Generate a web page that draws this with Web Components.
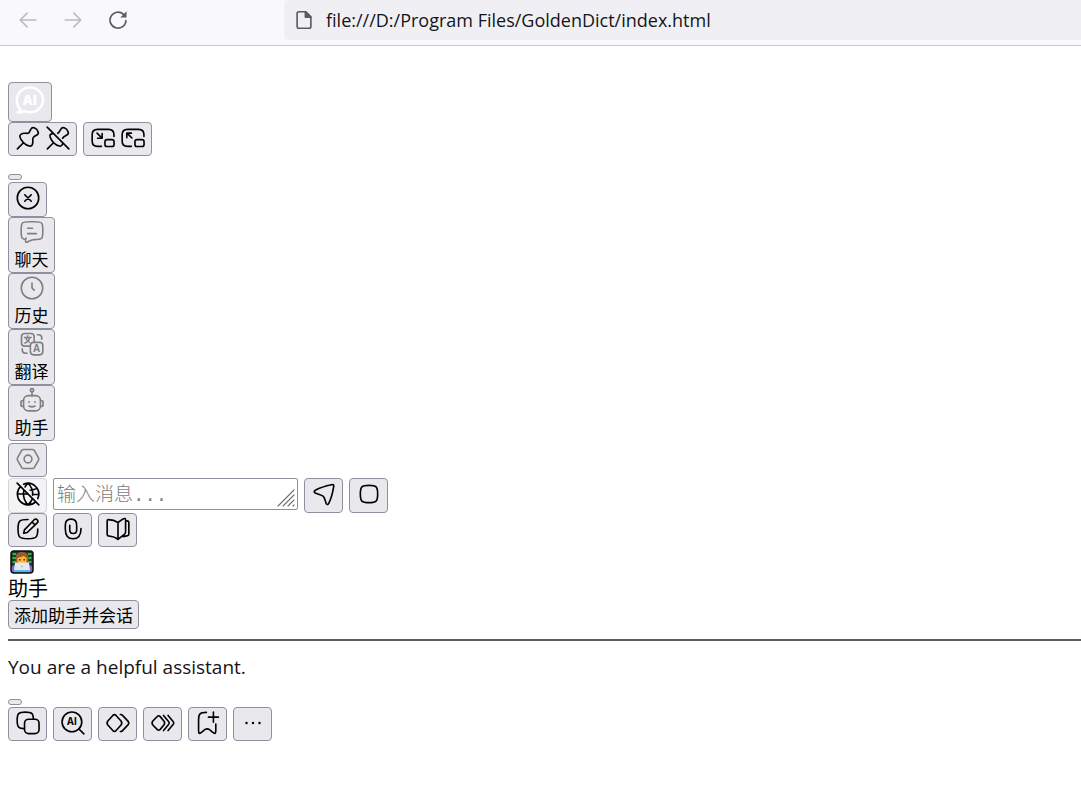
<!DOCTYPE html>
<html lang="zh-CN">
<head>
<meta charset="utf-8">
<meta name="viewport" content="width=device-width, initial-scale=1">
<title>GoldenDict</title>
<style>
  body { margin: 0; background: #fff; color: #15141a; font-family: "Open Sans", "Noto Sans CJK SC", sans-serif; }
</style>
</head>
<body>
<browser-bar url="file:///D:/Program Files/GoldenDict/index.html"></browser-bar>
<assistant-page></assistant-page>

<script>
const ICONS = {
  back: '<path d="M20.500 12H4M11 4.500L3.500 12L11 19.500"/>',
  forward: '<path d="M3.500 12H20M13 4.500L20.500 12L13 19.500"/>',
  reload: '<path d="M20.700 12.500A8.700 8.700 0 1 1 18 5.800"/><path d="M21.300 2.500V9.300H14.500Z" fill="currentColor" stroke="none"/>',
  file: '<path d="M6.500 3H14L19.500 8.500V19Q19.500 21 17.500 21H6.500Q4.500 21 4.500 19V5Q4.500 3 6.500 3Z"/><path d="M13.500 3V9H19.500Z" fill="currentColor"/>',
  logo: '<path d="M5 19.600C3.400 17.800 2.200 15.200 2.200 12A9.800 9.300 0 1 1 12 21.200C10.600 21.200 9.200 20.900 8 20.300C6.600 20.800 4.600 22 2.900 21.500C2.300 21.200 4.700 20.600 5 19.600Z"/><text x="12" y="15.500" font-size="10" font-weight="800" text-anchor="middle" fill="currentColor" stroke="none">AI</text>',
  pin: '<path d="M2.200 22L7.800 16.400M13.300 19.400C9.400 18.600 5.300 14.600 4.500 10.700C4.300 9.700 4.600 9 5.700 8.400C6.800 7.700 8 7.500 9.400 7.600C11.400 7.800 12.100 7.900 12.600 7.400C13.200 6.900 14 5 14.700 3.800C15.400 2.500 16.300 2.100 17.700 2.600C19.500 3.200 20.800 4.600 21.400 6.400C21.800 7.700 21.500 8.500 20.200 9.200L18.100 10.400C16.600 11.300 16.300 11.600 16.400 13.200C16.600 15 16.800 16.600 15.900 18.300C15.400 19.300 14.600 19.700 13.300 19.400Z"/>',
  unpin: '<path d="M2.200 22L7.800 16.400M2 2L22 22M7.500 7.700C4.500 8.300 4.200 9.200 4.800 11.400C6 15 9.600 18.600 13.300 19.400C15.300 19.800 16.200 18.200 16.400 16.500M11.800 7.700C12.800 7.200 13.600 5.800 14.700 3.800C15.400 2.500 16.300 2.100 17.700 2.600C19.500 3.200 20.800 4.600 21.400 6.400C21.800 7.700 21.500 8.500 20.200 9.200C18 10.500 17.200 10.700 16.300 12.200"/>',
  pipIn: '<path d="M22.100 10.500V9Q22.100 4 17.100 4H7Q2 4 2 9V14.700Q2 19.700 7 19.700H10.500M6.500 7.500L11 12M11.200 8V12.200H7"/><rect x="13.800" y="13.500" width="8.400" height="6.400" rx="2"/>',
  pipOut: '<path d="M22.100 10.500V9Q22.100 4 17.100 4H7Q2 4 2 9V14.700Q2 19.700 7 19.700H10.500M11 12L6.500 7.500M6.300 11.700V7.500H10.500"/><rect x="13.800" y="13.500" width="8.400" height="6.400" rx="2"/>',
  close: '<circle cx="12" cy="12" r="9.900"/><path d="M9 9L15 15M15 9L9 15"/>',
  chat: '<path d="M6.100 19C4.800 18.900 3.800 18.500 3.200 17.800C2 16.700 2 14.800 2 11C2 6.700 2 4.800 3.200 3.700C4.300 2.500 6.200 2.500 10 2.500H14C17.800 2.500 19.700 2.500 20.800 3.700C22 4.800 22 6.700 22 11C22 14.800 22 16.700 20.800 17.800C19.700 19 17.800 19 14 19C11.900 19.100 10.700 19.900 9.100 20.600C7.600 21.300 6.800 21.700 6.300 21.400C5.400 20.700 6.300 18.500 6.500 17.500M8 8.500H12.500M8 13.500H16"/>',
  history: '<circle cx="12" cy="12" r="9.900"/><path d="M12 7.500V12L14 14"/>',
  translate: '<rect x="2.300" y="2.300" width="11.700" height="11.700" rx="3"/><rect x="10.500" y="10.500" width="11.500" height="11.500" rx="3" fill="#e9e9ed"/><path d="M17 3.500H18Q21 3.500 21 6.500V7.500M3 16.500V17.500Q3 20.500 6 20.500H7.500"/><path d="M8 4.400V5.700M5 6H11.200M10 6C9.300 8.500 7.500 10.400 5.300 11.200M6.300 6.300C7 8.500 8 9.500 9.500 10.300" stroke-width="1.300"/><text x="16.250" y="19.800" font-size="9" font-weight="700" text-anchor="middle" fill="currentColor" stroke="none">A</text>',
  robot: '<circle cx="12" cy="3" r="1.500"/><path d="M12 4.500V8"/><rect x="4.200" y="8" width="15.600" height="14" rx="4.500"/><path d="M4 12.500Q1.800 12.500 1.800 14V16.500Q1.800 18 4 18M20 12.500Q22.200 12.500 22.200 14V16.500Q22.200 18 20 18M9.300 13.600V14M14.700 13.600V14M9.300 17.600Q12 19.200 14.700 17.600"/>',
  settings: '<path d="M8 3.200H16Q17.200 3.200 17.900 4.200L21.600 10.700Q22.300 12 21.600 13.300L17.900 19.800Q17.200 20.800 16 20.800H8Q6.800 20.800 6.100 19.800L2.400 13.300Q1.700 12 2.400 10.700L6.100 4.200Q6.800 3.200 8 3.200Z"/><circle cx="12" cy="12" r="3.600"/>',
  offline: '<path d="M2 2L22 22M5.200 5A9.900 9.900 0 0 0 19 19.200M8 3A9.900 9.900 0 0 1 21 16.200M2.300 12H12M16.500 12.500H21.800M8.200 8.500C7.200 13.500 8.500 18.500 12 22M9.300 5.500C10 4 11 2.800 12 2.100C15 5 16.700 9 16.200 13M16 16.500C15.200 18.500 13.700 20.500 12 22M14 8.500C16 8.300 18.500 7.800 20.300 6.800"/>',
  send: '<path d="M19.100 3.500C21 3.100 21.300 3.700 20.900 5.500C20 11 18.600 16.500 16.400 20.600C15.500 22.200 14.500 22.100 13.900 20.500C13.200 18.400 12.800 15.700 11.400 14.200C9.600 12.700 5.900 12.200 3.900 11.100C2.500 10.300 2.700 9.300 4 8.500C8.200 6.200 13.500 4.600 19.100 3.500Z"/>',
  stop: '<path d="M4 12C4 5.200 5.200 4 12 4C18.800 4 20 5.200 20 12C20 18.800 18.800 20 12 20C5.200 20 4 18.800 4 12Z"/>',
  edit: '<path d="M12 3.200C4 3.200 2.800 4.300 2.800 12C2.800 19.800 4 21 12 21C19.800 21 21 19.800 21 12M8 16L8.700 12.800L17.700 3.500C18.500 2.700 19.700 2.700 20.500 3.500C21.300 4.300 21.300 5.500 20.500 6.300L11.300 15.200ZM15.800 5.500L18.500 8.200"/>',
  attach: '<path d="M19.400 11.500C19.400 17.500 17 21 12 21C7 21 4.900 17.500 4.900 12V8.500C4.900 5 7 2.900 10.200 2.900C13.400 2.900 15.400 5 15.400 8.500V13C15.400 15 14.200 16.200 12.300 16.200C10.200 16.200 9 15 9 13V8.500"/>',
  book: '<path d="M12 6V21.500M12 6C9.800 4.500 6.500 3.400 3.200 3.400Q2 3.400 2 4.600V17Q2 18.300 3.500 18.400C7 18.800 9.700 19.600 12 21.500M12 6L16.700 2.700Q19 1.500 19 3.800V14.500Q19 16 17.800 17L12 21.500M19 4.300C21.200 4.300 22 4.600 22 6V16.500C22 18.300 21 18.300 16.800 19"/>',
  copy: '<path d="M8.500 17.200C3.200 17.100 2 15.700 2 9.500C2 3.200 3.200 2 9.500 2C15.400 2 16.900 3.100 17 8.500"/><rect x="8.800" y="8.500" width="13.400" height="13.300" rx="3.800"/>',
  search: '<circle cx="11" cy="11" r="9.100"/><path d="M17.500 17.500L22 22"/><text x="11" y="14.300" font-size="9" font-weight="700" text-anchor="middle" fill="currentColor" stroke="none">AI</text>',
  double: '<path d="M10.200 5L14.800 10.200Q16.200 12 14.800 13.800L10.200 19Q8.700 20.500 7.200 19L2.600 13.800Q1.200 12 2.600 10.200L7.200 5Q8.700 3.500 10.200 5ZM14.200 4.200Q15.300 4 16.200 5L21.400 10.500Q22.600 12 21.400 13.500L16.200 19Q15.300 20 14.200 19.800"/>',
  triple: '<path d="M9.400 6.100L12.800 10.200Q14.200 12 12.800 13.800L9.400 17.900Q8 19.400 6.600 17.900L2.600 13.800Q1.200 12 2.600 10.200L6.600 6.100Q8 4.600 9.400 6.100ZM12.500 5L17.300 10.800Q18.200 12 17.300 13.200L12.500 19M16.700 5L21.500 10.800Q22.400 12 21.500 13.200L16.700 19"/>',
  bookmark: '<path d="M10.500 2.200C4.500 2.200 3.300 3.500 3.300 9V19C3.300 21.700 4 22.300 6 20.700L9 18.200Q11.200 16.500 13.400 18.200L16.400 20.700C18.400 22.300 19.200 21.700 19.200 19V13M17 2V11.200M12.400 6.600H21.600"/>',
  more: '<path d="M6 12H6.010M12 12H12.010M18 12H18.010" stroke-width="2.200"/>',
  grip: '<path d="M2 22L22 2M8 22L22 8M14 22L22 14M20 22L22 20" stroke-linecap="butt"/>',
  coder: '<g stroke="none"><rect x="1" y="1" width="22" height="22" rx="3" fill="#173d22"/><path d="M2.500 3H6V5H2.500ZM2.500 7H6V9H2.500ZM2.500 11H6V13H2.500ZM18 3H21.500V5H18ZM18 7H21.500V9H18ZM18 11H21.500V13H18Z" fill="#35b04c"/><path d="M5.500 13V7.500Q6 2 12 2Q18 2 18.500 7.500V13Z" fill="#985a35"/><path d="M7.500 8L14 6L16.500 8V12Q16 15 12 15Q8 15 7.500 12Z" fill="#ffb72c"/><path d="M9 9H10.500V10.500H9ZM13.500 9H15V10.500H13.500Z" fill="#553019"/><path d="M1 22V18Q2 15 6 15H18Q22 15 23 18V22Z" fill="#8a63cf"/><path d="M5 12.500H19L20 20H4Z" fill="#e4e9ed"/><circle cx="12" cy="16.500" r="1" fill="#b5bcc4"/><path d="M4 20H20V22.500H4Z" fill="#55b9ec"/></g><rect x="1" y="1" width="22" height="22" rx="3" stroke="#101010"/>'
};

class UiIcon extends HTMLElement {
  constructor() { super(); this.attachShadow({ mode: 'open' }); }
  connectedCallback() {
    this.shadowRoot.innerHTML = `<style>
      :host { display: block; flex: none; width: var(--icon-size, 26px); height: var(--icon-size, 26px); }
      svg { display: block; width: 100%; height: 100%; font-family: "Open Sans", sans-serif; }
    </style><svg viewBox="0 0 24 24" fill="none" stroke="currentColor" stroke-width="${this.getAttribute('weight') || '1.5'}" stroke-linecap="round" stroke-linejoin="round" aria-hidden="true">${ICONS[this.getAttribute('name')]}</svg>`;
  }
}
customElements.define('ui-icon', UiIcon);

class UiButton extends HTMLElement {
  constructor() { super(); this.attachShadow({ mode: 'open' }); }
  connectedCallback() {
    this.shadowRoot.innerHTML = `<style>
      :host { display: block; flex: none; width: fit-content; }
      button { box-sizing: border-box; display: flex; align-items: flex-start; justify-content: center; gap: 4px;
        min-width: 39px; height: 34px; margin: 0; padding: 2px 5px 0; border: 1px solid #8f8f9d; border-radius: 4px;
        background: #e9e9ed; color: #000; font: 17px/24px "Noto Sans CJK SC", sans-serif; }
      button:disabled { background: #f4f4f6; border-color: #d2d2d8; }
      :host([kind="tall"]) button { height: 35px; }
      :host([kind="logo"]) button { width: 44px; height: 40px; padding-top: 1px; color: #fff; --icon-size: 32px; }
      :host([kind="pair"]) button { width: 69px; }
      :host([kind="empty"]) button { min-width: 14px; height: 6px; padding: 0; border-radius: 3px; }
      :host([kind="text"]) button { height: 29px; }
      :host([kind="nav"]) button { flex-direction: column; align-items: center; justify-content: flex-start; gap: 0;
        width: 47px; height: 56px; padding: 1px 0 0; line-height: 28px; }
    </style><button type="button"><slot></slot></button>`;
    const button = this.shadowRoot.querySelector('button');
    if (this.hasAttribute('label')) button.setAttribute('aria-label', this.getAttribute('label'));
    button.disabled = this.hasAttribute('disabled');
    if (button.disabled) this.style.color = '#000';
  }
}
customElements.define('ui-button', UiButton);

class NavItem extends HTMLElement {
  constructor() { super(); this.attachShadow({ mode: 'open' }); }
  connectedCallback() {
    this.shadowRoot.innerHTML = `<style>
      :host { display: block; }
      ui-icon { color: #808080; }
    </style><ui-button kind="nav"><ui-icon name="${this.getAttribute('icon')}"></ui-icon><slot></slot></ui-button>`;
  }
}
customElements.define('nav-item', NavItem);

class BrowserBar extends HTMLElement {
  constructor() { super(); this.attachShadow({ mode: 'open' }); }
  connectedCallback() {
    this.shadowRoot.innerHTML = `<style>
      :host { display: block; }
      header { display: flex; height: 45px; background: #f9f9fb; border-bottom: 1px solid #ccccce; --icon-size: 22px; }
      nav { display: flex; flex: none; box-sizing: border-box; width: 284px; height: 40px; align-items: center; gap: 23px; padding-left: 17px; }
      nav button { padding: 0; border: 0; background: none; color: #5b5b66; }
      nav button:disabled { color: #bbbbc0; }
      label { display: flex; flex: 1; height: 40px; align-items: center; gap: 11px; padding-left: 9px; background: #f0f0f4;
        border-radius: 5px 0 0 5px; color: #5b5b66; }
      input { flex: 1; min-width: 0; padding: 0; border: 0; outline: 0; background: none; color: #15141a;
        font: 18px/24px "Open Sans", sans-serif; }
    </style>
    <header>
      <nav>
        <button type="button" disabled aria-label="Back"><ui-icon name="back" weight="1.8"></ui-icon></button>
        <button type="button" disabled aria-label="Forward"><ui-icon name="forward" weight="1.8"></ui-icon></button>
        <button type="button" aria-label="Reload"><ui-icon name="reload" weight="1.8"></ui-icon></button>
      </nav>
      <label><ui-icon name="file" weight="1.8"></ui-icon><input type="text" aria-label="Address" value="${this.getAttribute('url')}"></label>
    </header>`;
  }
}
customElements.define('browser-bar', BrowserBar);

class MessageBox extends HTMLElement {
  constructor() { super(); this.attachShadow({ mode: 'open' }); }
  connectedCallback() {
    this.shadowRoot.innerHTML = `<style>
      :host { display: block; position: relative; width: 245px; height: 32px; }
      textarea { box-sizing: border-box; display: block; width: 100%; height: 100%; margin: 0; padding: 4px 3px 0; resize: none; overflow: hidden;
        border: 1px solid #8f8f9d; border-radius: 2px; font: 19px/26px "Liberation Mono", "Noto Sans CJK SC", monospace; }
      textarea::placeholder { color: #7c7c7c; font-weight: 300; }
      ui-icon { position: absolute; right: 2px; bottom: 2px; --icon-size: 20px; color: #666; pointer-events: none; }
    </style><textarea aria-label="输入消息" placeholder="输入消息..."></textarea><ui-icon name="grip"></ui-icon>`;
  }
}
customElements.define('message-box', MessageBox);

class AssistantPage extends HTMLElement {
  constructor() { super(); this.attachShadow({ mode: 'open' }); }
  connectedCallback() {
    this.shadowRoot.innerHTML = `<style>
      :host { display: block; padding: 36px 0 0 8px; }
      .row { display: flex; align-items: flex-start; gap: 6px; }
      .spaced { margin-top: 18px; }
      .close { margin-top: 2px; }
      nav { padding-bottom: 2px; }
      .settings { color: #808080; }
      .composer { margin-top: 1px; }
      .avatar { --icon-size: 24px; margin: 3px 2px 1px; }
      h1 { margin: 0; font: 20px/25px "Noto Sans CJK SC", sans-serif; color: #000; }
      hr { height: 2px; margin: 10px 0 13px; border: 0; background: #5c5c5c; }
      p { margin: 0; font-size: 19px; line-height: 27px; }
      .actions { margin-top: 2px; }
    </style>
    <main>
      <ui-button kind="logo" label="AI"><ui-icon name="logo" weight="1.9"></ui-icon></ui-button>
      <div class="row">
        <ui-button kind="pair" label="Pin"><ui-icon name="pin"></ui-icon><ui-icon name="unpin"></ui-icon></ui-button>
        <ui-button kind="pair" label="Resize"><ui-icon name="pipIn"></ui-icon><ui-icon name="pipOut"></ui-icon></ui-button>
      </div>
      <ui-button class="spaced" kind="empty" label="Menu"></ui-button>
      <ui-button class="close" kind="tall" label="Close"><ui-icon name="close"></ui-icon></ui-button>
      <nav>
        <nav-item icon="chat">聊天</nav-item>
        <nav-item icon="history">历史</nav-item>
        <nav-item icon="translate">翻译</nav-item>
        <nav-item icon="robot">助手</nav-item>
      </nav>
      <ui-button label="Settings"><ui-icon class="settings" name="settings"></ui-icon></ui-button>
      <div class="row composer">
        <ui-button kind="tall" label="Web search" disabled><ui-icon name="offline"></ui-icon></ui-button>
        <message-box></message-box>
        <ui-button kind="tall" label="Send"><ui-icon name="send"></ui-icon></ui-button>
        <ui-button kind="tall" label="Stop"><ui-icon name="stop"></ui-icon></ui-button>
      </div>
      <div class="row">
        <ui-button label="New chat"><ui-icon name="edit"></ui-icon></ui-button>
        <ui-button label="Attach"><ui-icon name="attach"></ui-icon></ui-button>
        <ui-button label="Prompts"><ui-icon name="book"></ui-icon></ui-button>
      </div>
      <ui-icon class="avatar" name="coder"></ui-icon>
      <h1>助手</h1>
      <ui-button kind="text">添加助手并会话</ui-button>
      <hr>
      <p>You are a helpful assistant.</p>
      <ui-button class="spaced" kind="empty" label="Menu"></ui-button>
      <div class="row actions">
        <ui-button label="Copy"><ui-icon name="copy"></ui-icon></ui-button>
        <ui-button label="AI search"><ui-icon name="search"></ui-icon></ui-button>
        <ui-button label="Next"><ui-icon name="double"></ui-icon></ui-button>
        <ui-button label="Last"><ui-icon name="triple"></ui-icon></ui-button>
        <ui-button label="Bookmark"><ui-icon name="bookmark"></ui-icon></ui-button>
        <ui-button label="More"><ui-icon name="more"></ui-icon></ui-button>
      </div>
    </main>`;
  }
}
customElements.define('assistant-page', AssistantPage);
</script>
</body>
</html>
